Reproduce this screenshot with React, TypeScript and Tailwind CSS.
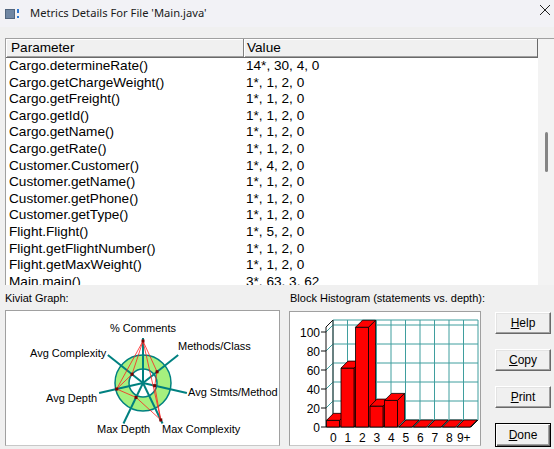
import React from "react";

const rows: [string, string][] = [
  ["Cargo.determineRate()", "14*, 30, 4, 0"],
  ["Cargo.getChargeWeight()", "1*, 1, 2, 0"],
  ["Cargo.getFreight()", "1*, 1, 2, 0"],
  ["Cargo.getId()", "1*, 1, 2, 0"],
  ["Cargo.getName()", "1*, 1, 2, 0"],
  ["Cargo.getRate()", "1*, 1, 2, 0"],
  ["Customer.Customer()", "1*, 4, 2, 0"],
  ["Customer.getName()", "1*, 1, 2, 0"],
  ["Customer.getPhone()", "1*, 1, 2, 0"],
  ["Customer.getType()", "1*, 1, 2, 0"],
  ["Flight.Flight()", "1*, 5, 2, 0"],
  ["Flight.getFlightNumber()", "1*, 1, 2, 0"],
  ["Flight.getMaxWeight()", "1*, 1, 2, 0"],
  ["Main.main()", "3*, 63, 3, 62"],
];

const FONT = "'Liberation Sans', Arial, sans-serif";

function Histogram() {
  const x0 = 326;
  const yb = 427;
  const s = 0.95;
  const dx = 7;
  const dy = -7;
  const cw = 14.5;
  const yF = (v: number) => yb - v * s;
  const vals = [7, 62, 105, 22, 28, 0, 0, 0, 0, 0];
  const labels = ["0", "1", "2", "3", "4", "5", "6", "7", "8", "9+"];
  const ticks = [0, 20, 40, 60, 80, 100];
  const teal = "#3f9e9e";
  const backL = x0 + dx;
  const backR = x0 + dx + cw * 10;
  const backTop = 320;
  const backBot = yb + dy;
  return (
    <svg width={190} height={133} viewBox="290 312 190 133" style={{ fontFamily: FONT }}>
      <rect x={backL} y={backTop} width={backR - backL} height={backBot - backTop} fill="#ffffff" />
      {ticks.map((v) => (
        <line key={"h" + v} x1={backL} x2={backR} y1={yF(v) + dy} y2={yF(v) + dy} stroke={teal} strokeWidth={1} />
      ))}
      <line x1={backL} x2={backR} y1={backTop} y2={backTop} stroke={teal} strokeWidth={1} />
      {Array.from({ length: 11 }).map((_, i) => (
        <line key={"v" + i} x1={backL + i * cw} x2={backL + i * cw} y1={backTop} y2={backBot} stroke={teal} strokeWidth={1} />
      ))}
      {ticks.map((v) => (
        <line key={"d" + v} x1={x0} y1={yF(v)} x2={x0 + dx} y2={yF(v) + dy} stroke={teal} strokeWidth={1} />
      ))}
      {Array.from({ length: 11 }).map((_, i) => (
        <line key={"f" + i} x1={x0 + i * cw} y1={yb} x2={x0 + i * cw + dx} y2={yb + dy} stroke={teal} strokeWidth={1} />
      ))}
      <line x1={backL} y1={backTop} x2={backL} y2={backBot} stroke="#333" strokeWidth={1} />
      <line x1={x0} y1={yb} x2={x0} y2={backTop - dy} stroke="#111" strokeWidth={1} />
      <line x1={x0} y1={backTop - dy} x2={backL} y2={backTop} stroke="#111" strokeWidth={1} />
      <line x1={x0} y1={yb} x2={x0 + cw * 10} y2={yb} stroke="#111" strokeWidth={1} />
      <line x1={x0 + cw * 10} y1={yb} x2={backR} y2={backBot} stroke="#111" strokeWidth={1} />
      {ticks.map((v) => (
        <line key={"t" + v} x1={x0 - 5} x2={x0} y1={yF(v)} y2={yF(v)} stroke="#111" strokeWidth={1} />
      ))}
      {ticks.map((v) => (
        <text key={"yl" + v} x={x0 - 6} y={yF(v) + 4.5} fontSize={12} textAnchor="end" fill="#000">
          {v}
        </text>
      ))}
      {vals.map((v, i) => {
        const x1 = x0 + i * cw + 0.5;
        const x2 = x1 + 13;
        const yt = yF(v);
        return (
          <g key={"b" + i} fill="#ff0000" stroke="#000" strokeWidth={0.8} strokeLinejoin="round">
            {v > 0 && (
              <polygon points={`${x2},${yt} ${x2 + dx},${yt + dy} ${x2 + dx},${yb + dy} ${x2},${yb}`} />
            )}
            {v > 0 && <rect x={x1} y={yt} width={x2 - x1} height={yb - yt} />}
            <polygon points={`${x1},${yt} ${x2},${yt} ${x2 + dx},${yt + dy} ${x1 + dx},${yt + dy}`} />
          </g>
        );
      })}
      {labels.map((l, i) => (
        <text key={"xl" + i} x={x0 + (i + 0.5) * cw} y={442} fontSize={12} textAnchor="middle" fill="#000">
          {l}
        </text>
      ))}
    </svg>
  );
}

function Kiviat() {
  const cx = 143;
  const cy = 383;
  const L = 45;
  const teal = "#008080";
  const radii = [42, 18, 12, 41, 16, 27, 14];
  const ang = (k: number) => ((-90 + (k * 360) / 7) * Math.PI) / 180;
  const pts = radii.map((r, k) => [cx + r * Math.cos(ang(k)), cy + r * Math.sin(ang(k))]);
  const poly = pts.map((p) => `${p[0]},${p[1]}`).join(" ");
  const labels: [string, number, number][] = [
    ["% Comments", 110, 331.5],
    ["Methods/Class", 178, 350],
    ["Avg Stmts/Method", 188, 396],
    ["Max Complexity", 162, 433],
    ["Max Depth", 97, 433],
    ["Avg Depth", 46, 402],
    ["Avg Complexity", 30, 356.5],
  ];
  return (
    <svg width={273} height={134} viewBox="6 311 273 134" style={{ fontFamily: FONT }}>
      <circle cx={cx} cy={cy} r={28} fill="#a6f07e" stroke={teal} strokeWidth={1.5} />
      <circle cx={cx} cy={cy} r={14} fill="#ffffff" stroke={teal} strokeWidth={1.5} />
      {Array.from({ length: 7 }).map((_, k) => (
        <line
          key={k}
          x1={cx}
          y1={cy}
          x2={cx + L * Math.cos(ang(k))}
          y2={cy + L * Math.sin(ang(k))}
          stroke={teal}
          strokeWidth={2}
        />
      ))}
      <polygon points={poly} fill="none" stroke="#ff2020" strokeWidth={0.8} />
      <line x1={pts[0][0]} y1={pts[0][1]} x2={pts[5][0]} y2={pts[5][1]} stroke="#ff2020" strokeWidth={0.8} />
      <line x1={pts[0][0]} y1={pts[0][1]} x2={pts[3][0]} y2={pts[3][1]} stroke="#ff2020" strokeWidth={0.8} />
      {pts.map((p, i) => (
        <rect key={i} x={p[0] - 1.5} y={p[1] - 1.5} width={3} height={3} fill="#7a0000" />
      ))}
      {labels.map(([t, x, y]) => (
        <text key={t} x={x} y={y} fontSize={11} fill="#000">
          {t}
        </text>
      ))}
    </svg>
  );
}

function Btn({ u, rest, def }: { u: string; rest: string; def?: boolean }) {
  return (
    <div
      className={
        "w-[56px] flex items-center justify-center text-[12px] text-black bg-[#f0f0f0] border " +
        (def
          ? "h-[24px] border-[#000000] shadow-[inset_1px_1px_0_#ffffff,inset_-1px_-1px_0_#696969,inset_-2px_-2px_0_#a0a0a0]"
          : "h-[22px] border-t-[#ffffff] border-l-[#ffffff] border-r-[#696969] border-b-[#696969] shadow-[inset_-1px_-1px_0_#a0a0a0,inset_1px_1px_0_#e3e3e3]")
      }
    >
      <span>
        <span className="underline">{u}</span>
        {rest}
      </span>
    </div>
  );
}

export default function App() {
  return (
    <div
      className="w-[554px] h-[449px] bg-[#f0f0f0] overflow-hidden text-black"
      style={{ fontFamily: FONT }}
    >
      <div className="h-[27px] bg-[#f2f2f6] flex items-center relative">
        <svg width={16} height={14} viewBox="0 0 16 14" className="ml-[5px]">
          <rect x={0} y={2} width={10} height={10} fill="#51657e" />
          <rect x={1} y={3} width={8} height={8} fill="#6f86a3" />
          <rect x={12} y={2} width={2} height={4} fill="#2f78d0" />
          <rect x={12} y={9} width={2} height={2} fill="#2f78d0" />
        </svg>
        <span
          className="ml-[9px] text-[11.2px] text-[#1a1a1a]"
          style={{ fontFamily: "'Noto Sans', 'Open Sans', sans-serif" }}
        >
          Metrics Details For File 'Main.java'
        </span>
        <svg width={12} height={12} viewBox="0 0 12 12" className="absolute left-[539px] top-[4px]">
          <path d="M1 1 L11 11 M11 1 L1 11" stroke="#222" strokeWidth={1} />
        </svg>
      </div>

      <div className="mt-[11px] ml-[5px] h-[247px] flex border-t border-[#a0a0a0] bg-white overflow-hidden">
        <div className="w-[533px] flex flex-col border-l border-[#a0a0a0] text-[13.6px]">
          <div className="h-[19px] flex bg-[#f0f0f0] border-b border-b-[#696969] shadow-[inset_0_-1px_0_#a0a0a0] leading-[18px]">
            <div className="w-[238px] pl-[5px] border-r border-r-[#808080] shadow-[inset_1px_1px_0_#ffffff]">
              Parameter
            </div>
            <div className="flex-1 pl-[3px] border-r border-r-[#696969] shadow-[inset_1px_1px_0_#ffffff]">
              Value
            </div>
          </div>
          {rows.map(([p, v]) => (
            <div key={p} className="h-[16.6px] shrink-0 flex leading-[16.6px] whitespace-nowrap">
              <div className="w-[239px] pl-[3px]">{p}</div>
              <div className="flex-1 pl-[1px]">{v}</div>
            </div>
          ))}
        </div>
        <div className="w-[16px] bg-[#f3f3f3] relative">
          <div className="absolute left-[7px] top-[93px] w-[3px] h-[40px] rounded-full bg-[#858585]" />
        </div>
      </div>

      <div className="flex mt-[6px] ml-[5px]">
        <div className="w-[275px] flex flex-col">
          <div className="h-[14px] text-[11px] leading-[14px]">Kiviat Graph:</div>
          <div className="mt-[5px] h-[136px] border border-[#a0a0a0] border-b-[#c8c8c8] bg-white">
            <Kiviat />
          </div>
        </div>
        <div className="ml-[9px] w-[192px] flex flex-col">
          <div className="h-[14px] text-[11px] leading-[14px] pl-[1px] whitespace-nowrap">
            Block Histogram (statements vs. depth):
          </div>
          <div className="mt-[6px] h-[135px] border border-[#a0a0a0] border-b-[#c8c8c8] bg-white">
            <Histogram />
          </div>
        </div>
        <div className="ml-[14px] w-[56px] flex flex-col pt-[21px] gap-[15px]">
          <Btn u="H" rest="elp" />
          <Btn u="C" rest="opy" />
          <Btn u="P" rest="rint" />
          <Btn u="D" rest="one" def />
        </div>
      </div>
    </div>
  );
}
